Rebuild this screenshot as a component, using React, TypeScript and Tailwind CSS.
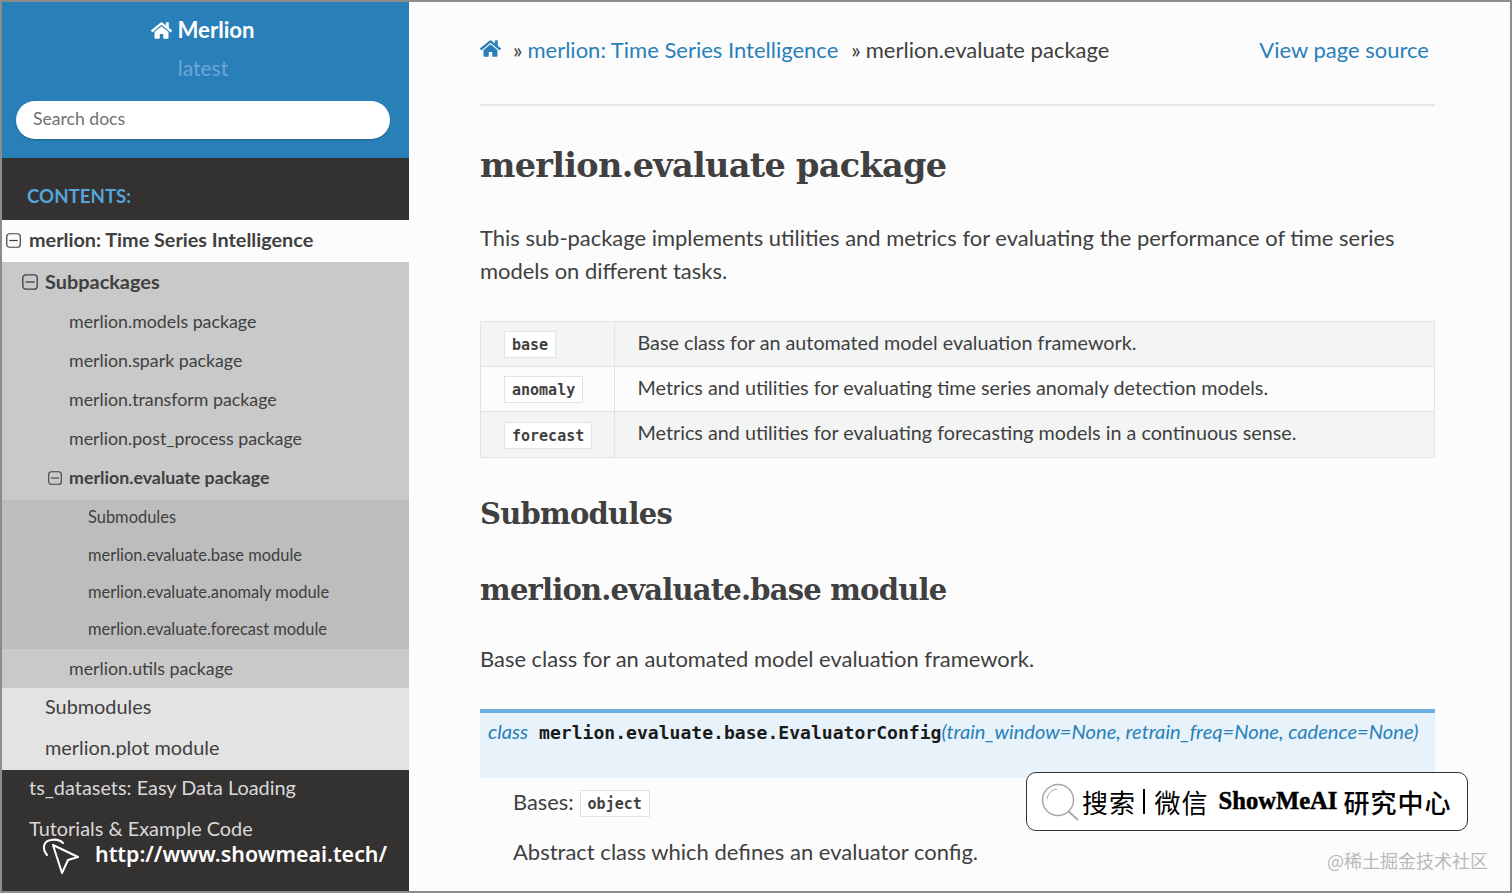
import { FaHome } from "react-icons/fa";

function MinusBox({ className }: { className: string }) {
  return (
    <svg className={className} viewBox="0 0 16 16" fill="none" stroke="#404040" strokeWidth="1.3">
      <rect x="0.8" y="0.8" width="14.4" height="14.4" rx="3" />
      <path d="M3.5 8h9" />
    </svg>
  );
}

function L2({ text }: { text: string }) {
  return <div className="h-[39px] pl-[67px] flex items-center text-[17.8px] text-[#404040]">{text}</div>;
}
function L3({ text }: { text: string }) {
  return <div className="h-[37.25px] pl-[86px] pb-[2px] flex items-center text-[16.45px] text-[#404040]">{text}</div>;
}

const rows = [
  ["base", "Base class for an automated model evaluation framework."],
  ["anomaly", "Metrics and utilities for evaluating time series anomaly detection models."],
  ["forecast", "Metrics and utilities for evaluating forecasting models in a continuous sense."],
];

const slab = "font-['DejaVu_Serif','Liberation_Serif',serif] font-bold text-[#404040]";
const mono = "font-['DejaVu_Sans_Mono','Liberation_Mono',monospace] font-bold";

export default function App() {
  return (
    <div className="relative w-[1512px] h-[893px] overflow-hidden bg-[#fcfcfc] flex font-['Lato','Noto_Sans_CJK_SC',sans-serif] border-2 border-[#8c8c8c]">
      <aside className="w-[407px] shrink-0 flex flex-col bg-[#343131]">
        <div className="h-[156px] bg-[#2980b9] flex flex-col items-center pr-[5px]">
          <div className="mt-[14px] flex items-center gap-[5px] text-white font-bold text-[22.2px] leading-[28px]">
            <FaHome className="w-[21px] h-[21px]" />
            <span>Merlion</span>
          </div>
          <div className="mt-[11px] text-[21px] leading-[26px] text-[#6ba6d8]">latest</div>
          <div className="mt-[20px] w-[374px] h-[38px] rounded-full bg-white flex items-center pl-[17px] pb-[2px] text-[17.6px] text-[#707070] shadow-[0_1px_2px_rgba(0,0,0,0.25)]">
            Search docs
          </div>
        </div>
        <div className="h-[62px] pl-[25px] pt-[25px] text-[18.7px] leading-[26px] font-bold text-[#55a5d9]">CONTENTS:</div>
        <div className="h-[42px] bg-[#fcfcfc] flex items-center pb-[2px] text-[19.8px] font-bold text-[#404040]">
          <MinusBox className="w-[15px] h-[15px] ml-[4px] mr-[8px]" />
          merlion: Time Series Intelligence
        </div>
        <div className="bg-[#c9c9c9]">
          <div className="h-[40px] flex items-center text-[19.9px] font-bold text-[#404040]">
            <MinusBox className="w-[16px] h-[16px] ml-[20px] mr-[7px]" />
            Subpackages
          </div>
          <L2 text="merlion.models package" />
          <L2 text="merlion.spark package" />
          <L2 text="merlion.transform package" />
          <L2 text="merlion.post_process package" />
          <div className="h-[42px] flex items-center pb-[3px] text-[17.8px] font-bold text-[#404040]">
            <MinusBox className="w-[14px] h-[14px] ml-[46px] mr-[7px]" />
            merlion.evaluate package
          </div>
          <div className="bg-[#bdbdbd]">
            <L3 text="Submodules" />
            <L3 text="merlion.evaluate.base module" />
            <L3 text="merlion.evaluate.anomaly module" />
            <L3 text="merlion.evaluate.forecast module" />
          </div>
          <L2 text="merlion.utils package" />
        </div>
        <div className="bg-[#e3e3e3] text-[19.85px] text-[#404040]">
          <div className="h-[41px] pl-[43px] pb-[3px] flex items-center">Submodules</div>
          <div className="h-[41px] pl-[43px] pb-[3px] flex items-center">merlion.plot module</div>
        </div>
        <div className="text-[19.9px] text-[#d9d9d9]">
          <div className="h-[36px] pl-[27px] flex items-center">ts_datasets: Easy Data Loading</div>
          <div className="h-[46px] pl-[27px] flex items-center">Tutorials &amp; Example Code</div>
        </div>
      </aside>

      <main className="flex-1 min-w-0 pl-[71px] pr-[75px] text-[#404040] text-[21.95px]">
        <div className="h-[104px] border-b-2 border-[#e6e6e6] flex items-start pt-[33px] leading-[30px] text-[22px]">
          <FaHome className="w-[21px] h-[21px] mt-[3px] text-[#2980b9] mr-[12px]" />
          <span className="mr-[5px]">»</span>
          <span className="text-[#2980b9]">merlion: Time Series Intelligence</span>
          <span className="ml-[13px] mr-[5px]">»</span>
          <span>merlion.evaluate package</span>
          <span className="ml-auto mr-[6px] text-[#2980b9]">View page source</span>
        </div>
        <h1 className={`${slab} mt-[36px] text-[33.5px] tracking-[-0.7px] leading-[48px]`}>merlion.evaluate package</h1>
        <p className="mt-[31px] leading-[33px]">
          This sub-package implements utilities and metrics for evaluating the performance of time series models on different tasks.
        </p>
        <div className="mt-[34px] border border-[#e1e4e5] text-[19.75px]">
          {rows.map(([code, desc], i) => (
            <div key={code} className={`h-[45px] flex ${i % 2 === 0 ? "bg-[#f3f5f5]" : "bg-[#fcfcfc]"} ${i < 2 ? "border-b border-[#e1e4e5]" : ""}`}>
              <div className="w-[134px] shrink-0 border-r border-[#e1e4e5] pl-[23px] flex items-center">
                <span className={`${mono} text-[15px] mt-[1px] pt-[2px] bg-white border border-[#e1e4e5] h-[27px] px-[7px] flex items-center`}>{code}</span>
              </div>
              <div className="pl-[22.5px] flex items-center pb-[3px]">{desc}</div>
            </div>
          ))}
        </div>
        <h2 className={`${slab} mt-[34px] text-[29px] tracking-[-0.75px] leading-[44px]`}>Submodules</h2>
        <h2 className={`${slab} mt-[32px] text-[29px] tracking-[-0.8px] leading-[44px]`}>merlion.evaluate.base module</h2>
        <p className="mt-[30px] leading-[33px]">Base class for an automated model evaluation framework.</p>
        <div className="mt-[34px] h-[69px] bg-[#e7f2fa] border-t-[4px] border-[#6ab0de] pl-[8px] pt-[3px] flex items-baseline whitespace-nowrap text-[20.15px] italic text-[#2980b9]">
          <span className="mr-[11px]">class</span>
          <span className={`${mono} not-italic text-[18.07px] text-[#1a1a1a]`}>merlion.evaluate.base.EvaluatorConfig</span>
          <span>(train_window=None, retrain_freq=None, cadence=None)</span>
        </div>
        <div className="pl-[33px]">
          <div className="mt-[10px] flex items-center h-[28px] text-[21.8px]">
            <span>Bases:</span>
            <span className={`${mono} ml-[6px] mt-[2px] pt-[2px] text-[15px] bg-white border border-[#e1e4e5] h-[27px] px-[7px] flex items-center`}>object</span>
          </div>
          <p className="mt-[19px] leading-[33px] text-[22px]">Abstract class which defines an evaluator config.</p>
        </div>
      </main>

      <div className="absolute left-[40px] top-[834px] flex items-center">
        <svg className="w-[38px] h-[38px]" viewBox="0 0 38 38" fill="none" stroke="#fff" strokeWidth="2" strokeLinejoin="round" strokeLinecap="round">
          <path d="M5 19C0 13 1 5 9 4c5-1 9 0 12 3" />
          <path d="M11 9l25 12-10 3-6 13z" />
        </svg>
        <span className="ml-[15px] mb-[2px] text-[21.4px] leading-[20px] font-semibold text-white font-['Noto_Sans',sans-serif] whitespace-nowrap">http://www.showmeai.tech/</span>
      </div>

      <div className="absolute left-[1024px] top-[770px] w-[442px] h-[59px] bg-white border border-[#333] rounded-[10px] flex items-center pl-[14px] whitespace-nowrap text-black font-['Noto_Sans_CJK_SC',sans-serif]">
        <svg className="w-[38px] h-[38px] shrink-0" viewBox="0 0 38 38" fill="none" stroke="#a8a8a8" strokeWidth="1.5">
          <circle cx="17" cy="17" r="15.5" />
          <path d="M6 16a11 11 0 0 1 10-10" strokeWidth="1" />
          <path d="M27 28l10 9" strokeWidth="2" />
        </svg>
        <span className="ml-[3px] text-[26px] tracking-[1px] leading-[34px]">搜索</span>
        <span className="ml-[7px] mr-[10px] w-[1.5px] h-[25px] bg-black shrink-0" />
        <span className="text-[26px] tracking-[1px] leading-[34px]">微信</span>
        <span className="ml-[10px] text-[24.6px] font-['Liberation_Serif',serif] font-bold [-webkit-text-stroke:0.5px_black]">ShowMeAI</span>
        <span className="ml-[6px] text-[26px] font-medium tracking-[1px] leading-[34px]">研究中心</span>
      </div>

      <div className="absolute left-[1325px] top-[845px] text-[18px] text-[#b9b9b9] font-['Noto_Sans_CJK_SC',sans-serif]">@稀土掘金技术社区</div>
    </div>
  );
}
